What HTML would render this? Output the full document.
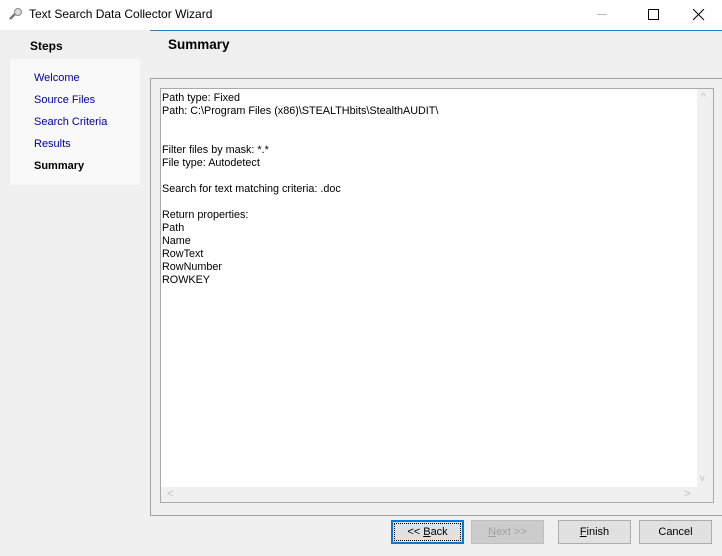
<!DOCTYPE html><html><head><style>
body{margin:0;width:722px;height:556px;background:#f0f0f0;font-family:"Liberation Sans",sans-serif;font-size:11px;position:relative;overflow:hidden}
div{position:absolute;box-sizing:border-box}
.t{white-space:pre;line-height:13px}
.btn{top:520px;width:73px;height:24px;border:1px solid #adadad;background:#e1e1e1;text-align:center;line-height:22px;font-size:11px}
</style></head><body>
<div style="left:0;top:0;width:722px;height:30px;background:#fff"></div>
<svg style="position:absolute;left:8px;top:7px" width="16" height="14"><line x1="2" y1="12" x2="7" y2="7" stroke="#777" stroke-width="2.5"/><circle cx="10" cy="5" r="3.5" fill="#ddd" stroke="#888"/></svg>
<div class="t" style="left:29px;top:8px;font-size:12px">Text Search Data Collector Wizard</div>
<div style="left:597px;top:14px;width:10px;height:1px;background:#bbb"></div>
<div style="left:648px;top:9px;width:11px;height:11px;border:1px solid #000"></div>
<svg style="position:absolute;left:693px;top:9px" width="12" height="12"><path d="M0 0L11 11M11 0L0 11" stroke="#000" stroke-width="1"/></svg>
<div class="t" style="left:30px;top:40px;font-weight:bold;font-size:12px">Steps</div>
<div style="left:10px;top:59px;width:130px;height:126px;background:#f9f9f9"></div>
<div class="t" style="left:34px;top:72px;color:#0000a0">Welcome</div>
<div class="t" style="left:34px;top:94px;color:#0000a0">Source Files</div>
<div class="t" style="left:34px;top:116px;color:#0000a0">Search Criteria</div>
<div class="t" style="left:34px;top:138px;color:#0000a0">Results</div>
<div class="t" style="left:34px;top:160px;font-weight:bold">Summary</div>
<div style="left:150px;top:30px;width:572px;height:48px;background:#efefef;border-top:1px solid #2b7cc0"></div>
<div class="t" style="left:168px;top:38px;font-weight:bold;font-size:13.5px">Summary</div>
<div style="left:150px;top:78px;width:572px;height:438px;border:1px solid #a0a0a0;border-right:none"></div>
<div style="left:160px;top:88px;width:554px;height:415px;border:1px solid #a9a9a9;background:#fff"></div>
<div style="left:697px;top:89px;width:16px;height:398px;background:#f0f0f0"></div>
<div style="left:161px;top:487px;width:552px;height:15px;background:#f0f0f0"></div>
<div class="t" style="left:701px;top:91px;color:#c0c0c0;font-size:10px">^</div>
<div class="t" style="left:700px;top:472px;color:#c0c0c0;font-size:9px">v</div>
<div class="t" style="left:167px;top:488px;color:#c0c0c0">&lt;</div>
<div class="t" style="left:684px;top:488px;color:#c0c0c0">&gt;</div>
<div class="t" style="left:162px;top:92px;font-size:10.8px">Path type: Fixed
Path: C:\Program Files (x86)\STEALTHbits\StealthAUDIT\


Filter files by mask: *.*
File type: Autodetect

Search for text matching criteria: .doc

Return properties:
Path
Name
RowText
RowNumber
ROWKEY</div>
<div class="btn" style="left:391px;border:2px solid #0078d7;line-height:20px"><span style="display:block;margin:1px;border:1px dotted #000;height:16px;line-height:16px">&lt;&lt; <u>B</u>ack</span></div>
<div class="btn" style="left:471px;background:#ccc;border-color:#bfbfbf;color:#a0a0a0"><u>N</u>ext &gt;&gt;</div>
<div class="btn" style="left:558px"><u>F</u>inish</div>
<div class="btn" style="left:639px">Cancel</div>
</body></html>
